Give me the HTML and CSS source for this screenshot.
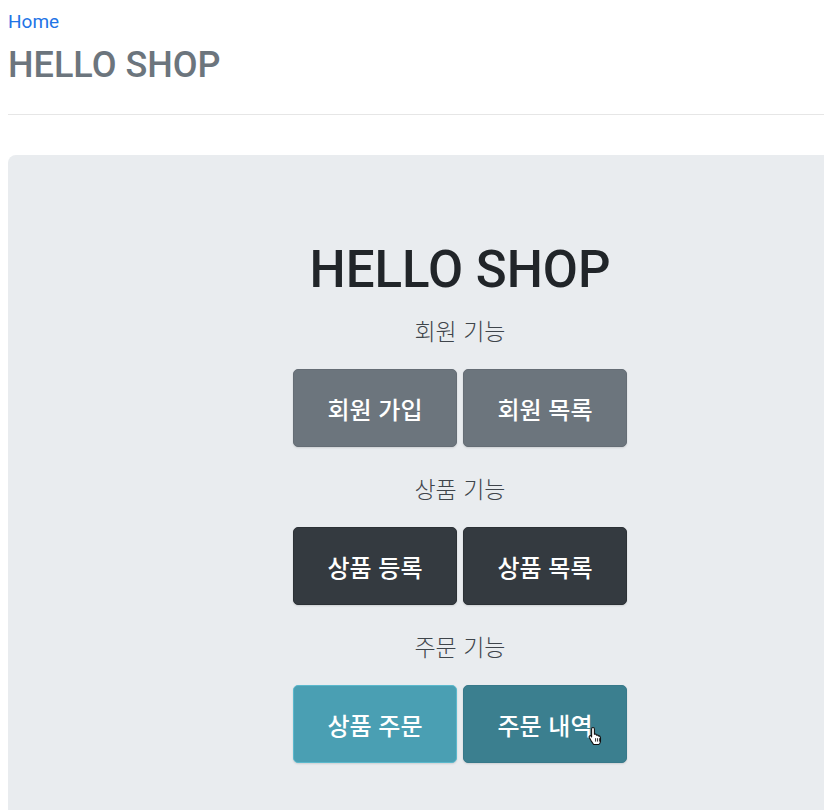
FILE: index.html
```html
<!DOCTYPE html>
<html lang="ko">
<head>
  <meta charset="UTF-8" />
  <meta name="viewport" content="width=device-width, initial-scale=1.0" />
  <title>HELLO SHOP</title>
  <link rel="stylesheet" href="styles.css">
</head>
<body>

<div class="page">
  <div class="header">
    <a class="home-link" href="#">Home</a>
    <h3 class="header-title">HELLO SHOP</h3>
  </div>
  <hr class="divider" />

  <div class="jumbotron">
    <h1 class="title">HELLO SHOP</h1>

    <div class="section">
      <p class="label">회원 기능</p>
      <div class="btn-row">
        <a class="btn btn-secondary" href="#">회원 가입</a>
        <a class="btn btn-secondary" href="#">회원 목록</a>
      </div>
    </div>

    <div class="section">
      <p class="label">상품 기능</p>
      <div class="btn-row">
        <a class="btn btn-dark" href="#">상품 등록</a>
        <a class="btn btn-dark" href="#">상품 목록</a>
      </div>
    </div>

    <div class="section">
      <p class="label">주문 기능</p>
      <div class="btn-row">
        <a class="btn btn-info" href="#">상품 주문</a>
        <a class="btn btn-info hover" href="#">주문 내역
          <svg class="cursor" width="16" height="20" viewBox="0 0 16 20">
            <path d="M5 1.5c.8 0 1.4.6 1.4 1.4v5.3l.4-.1c.7-.2 1.4.2 1.6.8l.1.3.3-.1c.7-.2 1.4.2 1.6.9l.3-.1c.7-.1 1.3.3 1.5.9l.3 1v3.5c0 .8-.3 1.6-.8 2.2L10.8 18.5H5.6L3 14.6 1.3 11.4c-.3-.6-.1-1.3.5-1.6.5-.3 1.2-.1 1.5.4L3.6 11V2.9C3.6 2.1 4.2 1.5 5 1.5z" fill="#fff" stroke="#111" stroke-width="1.1" stroke-linejoin="round"/>
            <path d="M7.6 12.2v3.4M9.6 12.2v3.4M11.6 12.2v3.4" stroke="#111" stroke-width="0.9"/>
          </svg>
        </a>
      </div>
    </div>
  </div>
</div>

</body>
</html>
```

FILE: styles.css
```css
html {
  overflow: hidden;
}

body {
  margin: 8px 0 8px 8px;
  background: #fff;
  font-family: Roboto, "Noto Sans CJK KR", sans-serif;
  color: #212529;
}

.page {
  width: 904px;
}

.header {
  display: flex;
  flex-direction: column;
}

.home-link {
  font-size: 19px;
  line-height: 27px;
  color: #1f74e6;
  text-decoration: none;
}

.header-title {
  margin: 9px 0 0;
  font-size: 36px;
  line-height: 42px;
  font-weight: 500;
  color: #6c757d;
}

.divider {
  margin: 28px 0 0;
  border: 0;
  border-top: 1px solid #e6e6e6;
}

.jumbotron {
  margin-top: 40px;
  padding: 84px 0 60px;
  background: #e9ecef;
  border-radius: 8px;
  display: flex;
  flex-direction: column;
  align-items: center;
}

.title {
  margin: 0 0 11px;
  font-size: 51px;
  line-height: 62px;
  font-weight: 500;
  color: #212529;
}

.section {
  display: flex;
  flex-direction: column;
  align-items: center;
  margin-bottom: 23px;
}

.label {
  margin: 0 0 21px;
  font-family: "Noto Sans CJK KR", sans-serif;
  font-size: 23px;
  line-height: 36px;
  font-weight: 300;
  color: #3f454b;
}

.btn-row {
  display: flex;
  gap: 6px;
}

.btn {
  position: relative;
  box-sizing: border-box;
  width: 164px;
  height: 78px;
  display: flex;
  align-items: center;
  justify-content: center;
  border-radius: 5px;
  font-family: "Noto Sans CJK KR", sans-serif;
  font-size: 24px;
  font-weight: 500;
  color: #fff;
  text-decoration: none;
  box-shadow: 0 1px 2px rgba(0, 0, 0, 0.12);
}

.btn-secondary {
  background: #6c757d;
  border: 1px solid #656d75;
}

.btn-dark {
  background: #343a40;
  border: 1px solid #2c3136;
}

.btn-info {
  background: #4a9fb3;
  border: 1px solid #5bb8cc;
}

.btn-info.hover {
  background: #3b7f8f;
  border-color: #37798a;
}

.cursor {
  position: absolute;
  left: 124px;
  top: 40px;
}
```
